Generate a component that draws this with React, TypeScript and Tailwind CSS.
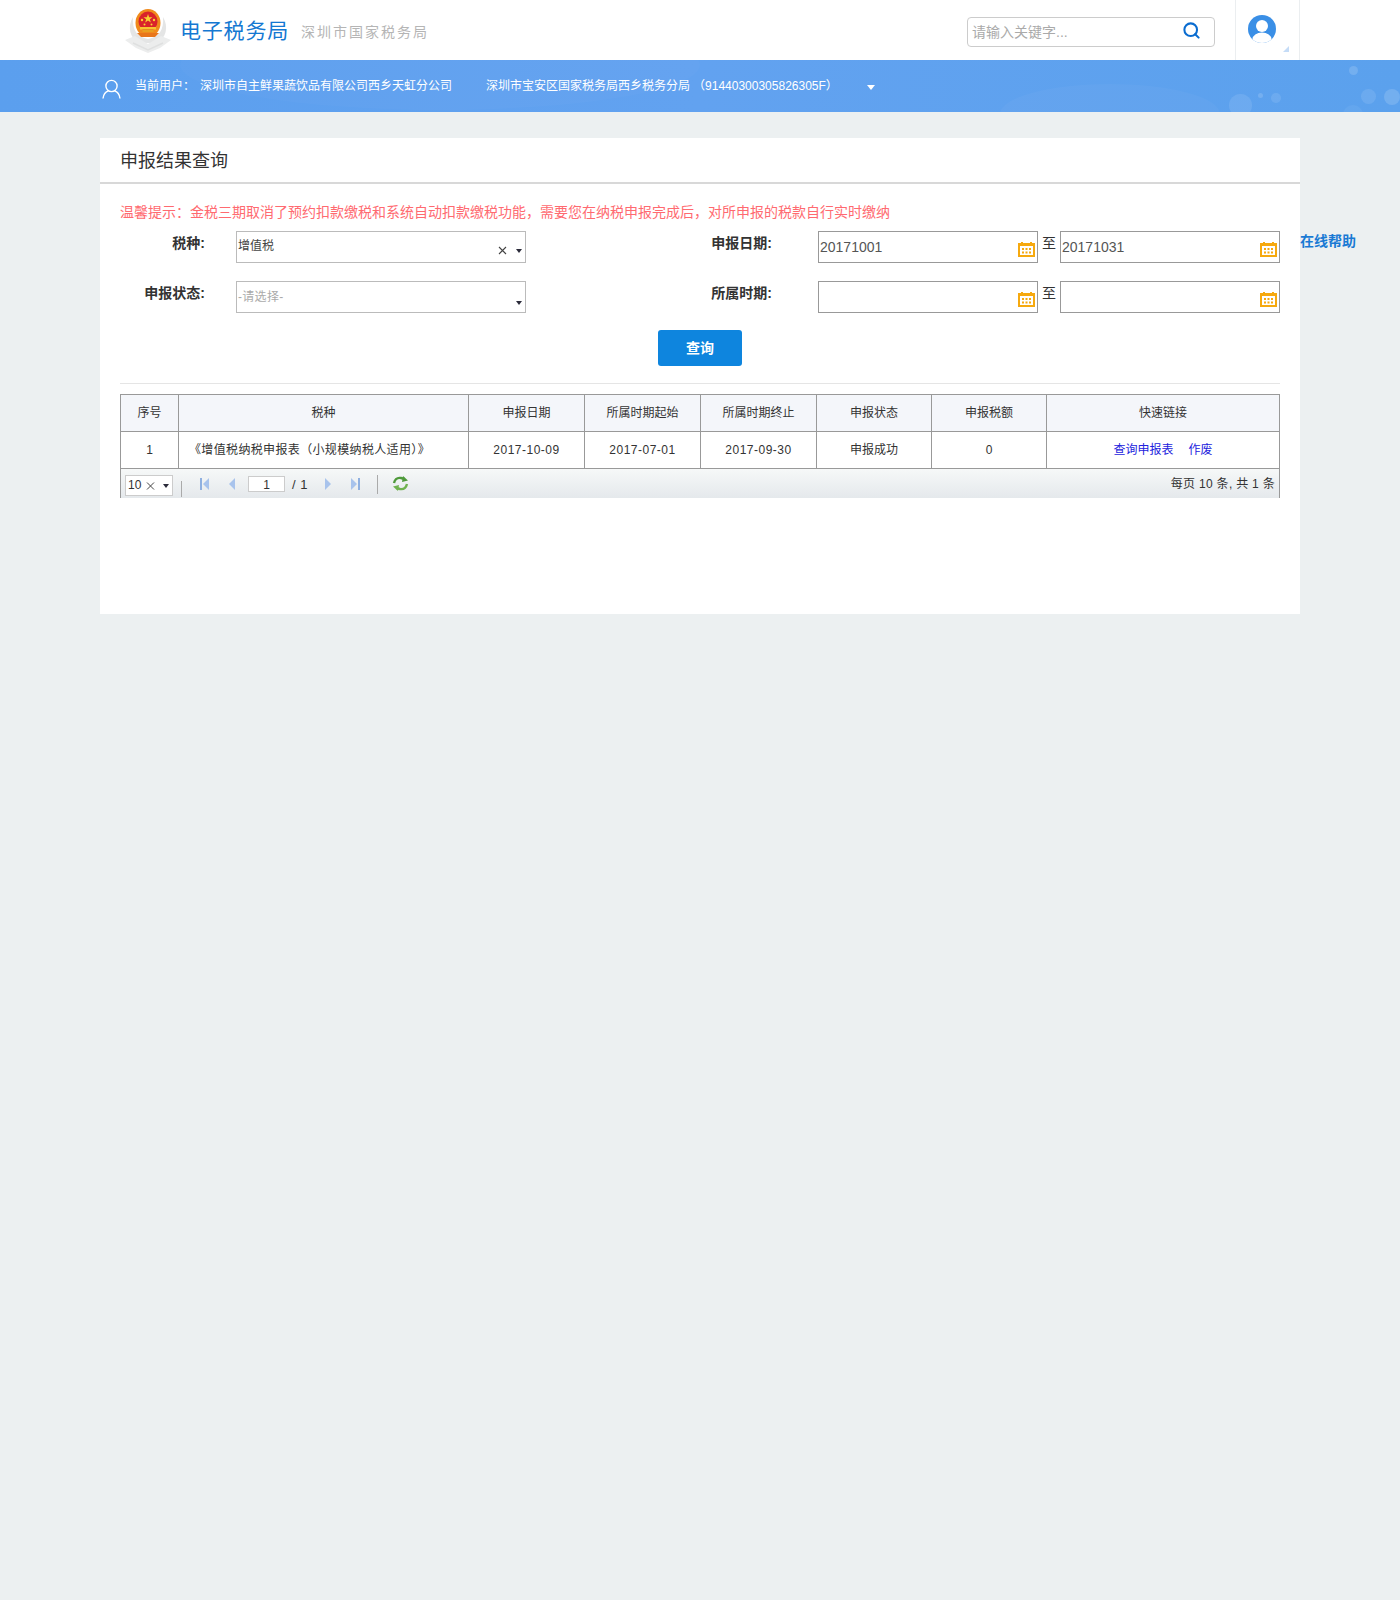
import { Search } from "lucide-react";

const font = "font-['Liberation_Sans','Noto_Sans_CJK_SC',sans-serif]";

const columns = [
  { title: "序号", width: "w-[58px]" },
  { title: "税种", width: "w-[290px]" },
  { title: "申报日期", width: "w-[116px]" },
  { title: "所属时期起始", width: "w-[116px]" },
  { title: "所属时期终止", width: "w-[116px]" },
  { title: "申报状态", width: "w-[115px]" },
  { title: "申报税额", width: "w-[115px]" },
  { title: "快速链接", width: "w-[233px]" },
];

function Emblem() {
  return (
    <svg width="48" height="46" viewBox="0 0 48 46" className="shrink-0">
      {/* wreath and base */}
      <path d="M9 10 C3 20 6 31 15 36 L33 36 C42 31 45 20 39 10 C40 23 35 30 24 32 C13 30 8 23 9 10 Z" fill="#e4e5e5" />
      <path d="M1 33 L11 29 L24 37 L37 29 L47 33 L36 41 L24 46 L12 41 Z" fill="#eceded" />
      <path d="M9 36 L24 43 L39 36" fill="none" stroke="#dfe0e0" strokeWidth="1.5" />
      {/* emblem */}
      <ellipse cx="24" cy="16" rx="12.5" ry="14" fill="#f08a1c" />
      <ellipse cx="24" cy="14.5" rx="9.5" ry="10" fill="#d9232b" />
      <polygon points="24,7 25.1,10.2 28.5,10.2 25.8,12.2 26.8,15.4 24,13.4 21.2,15.4 22.2,12.2 19.5,10.2 22.9,10.2" fill="#f9d331" />
      <circle cx="18" cy="13" r="1.2" fill="#f9d331" />
      <circle cx="30" cy="13" r="1.2" fill="#f9d331" />
      <circle cx="20.5" cy="17.5" r="1" fill="#f9d331" />
      <circle cx="27.5" cy="17.5" r="1" fill="#f9d331" />
      <rect x="16" y="20" width="16" height="2.5" fill="#f7c531" />
      <rect x="18.5" y="22.5" width="11" height="2.5" fill="#e8a020" />
      <path d="M13 26 H35 L31 30 H17 Z" fill="#e8761a" />
    </svg>
  );
}

function UserOutline() {
  return (
    <svg width="19" height="20" viewBox="0 0 19 20" fill="none" stroke="white" strokeWidth="1.4">
      <circle cx="9.5" cy="7" r="5.6" />
      <path d="M1 19.5 C1.5 15 4 12.5 6.5 11.8 M18 19.5 C17.5 15 15 12.5 12.5 11.8" />
    </svg>
  );
}

function Avatar() {
  return (
    <svg width="28" height="28" viewBox="0 0 28 28">
      <defs>
        <clipPath id="avatar-clip">
          <circle cx="14" cy="14" r="14" />
        </clipPath>
      </defs>
      <circle cx="14" cy="14" r="14" fill="#3a8fe6" />
      <g clipPath="url(#avatar-clip)">
        <circle cx="14" cy="11" r="6" fill="white" />
        <ellipse cx="14" cy="24" rx="9.5" ry="6.5" fill="white" />
      </g>
    </svg>
  );
}

function CalendarIcon() {
  return (
    <svg width="17" height="15" viewBox="0 0 17 15" className="absolute right-[2px] bottom-[5px]">
      <rect x="1" y="2" width="15" height="12" fill="white" stroke="#f6a90f" strokeWidth="2" />
      <rect x="0" y="1" width="17" height="3" fill="#f6a90f" />
      <rect x="3" y="0" width="2" height="2" fill="#f6a90f" />
      <rect x="12" y="0" width="2" height="2" fill="#f6a90f" />
      <g fill="#f6a90f">
        <rect x="4" y="6" width="2" height="2" />
        <rect x="7.5" y="6" width="2" height="2" />
        <rect x="11" y="6" width="2" height="2" />
        <rect x="4" y="9.5" width="2" height="2" />
        <rect x="7.5" y="9.5" width="2" height="2" />
        <rect x="11" y="9.5" width="2" height="2" />
      </g>
    </svg>
  );
}

function Caret() {
  return <span className="w-0 h-0 border-x-[3.5px] border-x-transparent border-t-[4px] border-t-[#2b2b3a]" />;
}

function SelectBox({ value, placeholder, clearable }: { value?: string; placeholder?: string; clearable?: boolean }) {
  return (
    <div className="relative w-[290px] h-[32px] border border-[#bbbbbb] bg-white pl-[1px] pt-[5px] text-[12px] leading-[18px]">
      {value ? (
        <span className="text-[#444]">{value}</span>
      ) : (
        <span className="relative top-[1px] tracking-[0.3px] text-[#aaa]">{placeholder}</span>
      )}
      <span className="absolute right-[3px] bottom-[7px] flex items-center gap-[9px]">
        {clearable && (
          <svg width="9" height="9" viewBox="0 0 9 9" stroke="#444" strokeWidth="1.1">
            <path d="M1 1 L8 8 M8 1 L1 8" />
          </svg>
        )}
        <Caret />
      </span>
    </div>
  );
}

function DateBox({ value }: { value?: string }) {
  return (
    <div className="relative w-[220px] h-[32px] border border-[#999] bg-white pl-[1px] text-[14px] leading-[30px] text-[#555]">
      {value}
      <CalendarIcon />
    </div>
  );
}

function DateRange({ from, to }: { from?: string; to?: string }) {
  return (
    <div className="flex items-start">
      <DateBox value={from} />
      <span className="w-[22px] text-center text-[14px] leading-[24px] text-[#333]">至</span>
      <DateBox value={to} />
    </div>
  );
}

function FieldLabel({ children, className }: { children: string; className: string }) {
  return (
    <label className={`${className} whitespace-nowrap text-right text-[14px] font-bold leading-[24px] text-[#333]`}>
      {children}
    </label>
  );
}

function PagerArrow({ dir, bar }: { dir: "left" | "right"; bar?: boolean }) {
  const flip = dir === "right" ? "scale(-1,1) translate(-10,0)" : undefined;
  return (
    <svg width="10" height="12" viewBox="0 0 10 12">
      <g transform={flip}>
        {bar && <rect x="0" y="0" width="2" height="12" fill="#8fb0e0" />}
        <polygon points="3,6 9,0 9,12" fill="#a8c3ec" />
      </g>
    </svg>
  );
}

function RefreshIcon() {
  return (
    <svg width="17" height="15" viewBox="0 0 17 15" fill="none">
      <path d="M2 7 C3 3 6 1.5 9 2 L12.5 3" stroke="#4f9a3b" strokeWidth="2.4" />
      <polygon points="11,0 16,4.5 10,6" fill="#4f9a3b" />
      <path d="M15 8 C14 12 11 13.5 8 13 L4.5 12" stroke="#6fb24f" strokeWidth="2.4" />
      <polygon points="6,15 1,10.5 7,9" fill="#6fb24f" />
    </svg>
  );
}

function Pager() {
  return (
    <div className="flex items-start h-[29px] border-x border-[#999] bg-gradient-to-b from-[#f6f8f8] to-[#e5e9ec] text-[12px] text-[#333]">
      <div className="relative ml-[4px] mt-[6px] w-[48px] h-[21px] border border-[#ccc] bg-white pl-[2px] text-[12px] leading-[18px]">
        10
        <span className="absolute right-[3px] bottom-[5px] flex items-center gap-[8px]">
          <svg width="9" height="8" viewBox="0 0 9 8" stroke="#444" strokeWidth="1">
            <path d="M1 0.5 L8 7.5 M8 0.5 L1 7.5" />
          </svg>
          <Caret />
        </span>
      </div>
      <span className="ml-[8px] mt-[12px] h-[16px] w-px bg-[#aaa]" />
      <div className="ml-[18px] mt-[6px] flex items-center">
        <PagerArrow dir="left" bar />
        <span className="ml-[16px]">
          <PagerArrow dir="left" />
        </span>
        <span className="ml-[12px] w-[37px] h-[16px] border border-[#ccc] bg-white text-center text-[12px] leading-[16px]">1</span>
        <span className="ml-[7px] text-[13px] leading-[16px] mt-[2px] tracking-[0.5px]">/ 1</span>
        <span className="ml-[16px]">
          <PagerArrow dir="right" />
        </span>
        <span className="ml-[16px]">
          <PagerArrow dir="right" bar />
        </span>
      </div>
      <span className="ml-[17px] mt-[6px] h-[19px] w-px bg-[#aaa]" />
      <span className="ml-[14px] mt-[7px]">
        <RefreshIcon />
      </span>
      <span className="ml-auto mr-[4px] mt-[6px] text-[12px] leading-[18px] tracking-[0.3px]">每页 10 条, 共 1 条</span>
    </div>
  );
}

function Bubbles() {
  return (
    <>
      <span className="absolute left-[180px] top-[-40px] w-[520px] h-[90px] rounded-[50%] bg-white/[0.02]" />
      <span className="absolute left-[1000px] top-[24px] w-[220px] h-[60px] rounded-[50%] bg-white/[0.03]" />
      <span className="absolute left-[1229px] top-[34px] w-[23px] h-[23px] rounded-full bg-white/10" />
      <span className="absolute left-[1258px] top-[33px] w-[5px] h-[5px] rounded-full bg-white/15" />
      <span className="absolute left-[1271px] top-[33px] w-[10px] h-[10px] rounded-full bg-white/10" />
      <span className="absolute left-[1349px] top-[6px] w-[9px] h-[9px] rounded-full bg-white/15" />
      <span className="absolute left-[1361px] top-[29px] w-[15px] h-[15px] rounded-full bg-white/10" />
      <span className="absolute left-[1384px] top-[29px] w-[16px] h-[16px] rounded-full bg-white/15" />
      <span className="absolute left-[1343px] top-[45px] w-[20px] h-[20px] rounded-full bg-white/5" />
    </>
  );
}

export default function App() {
  return (
    <div className={`${font} min-h-[1600px] bg-[#ecf0f1]`}>
      {/* Header */}
      <header className="h-[60px] bg-white">
        <div className="mx-auto flex w-[1200px] h-full items-center">
          <div className="ml-[24px] mb-[1px]">
            <Emblem />
          </div>
          <span className="ml-[8px] mt-[2px] text-[21px] tracking-[0.8px] text-[#1478d2]">电子税务局</span>
          <span className="ml-[12px] mt-[5px] text-[14px] tracking-[2px] text-[#b5b5b5]">深圳市国家税务局</span>
          <div className="ml-auto flex h-full items-center">
            <div className="mb-[-4px] flex h-[30px] w-[248px] items-center rounded-[4px] border border-[#ccc] pl-[4px] pr-[13px] text-[14px] text-[#aaa]">
              <span className="flex-1 mt-[1px]">请输入关键字...</span>
              <Search size={19} strokeWidth={2.6} className="mb-[3px] text-[#0a6cd0]" />
            </div>
            <div className="relative ml-[20px] flex h-full w-[65px] items-center border-x border-[#ebeef0] pb-[2px] pl-[12px]">
              <Avatar />
              <span className="absolute right-[10px] bottom-[8px] w-0 h-0 border-l-[6px] border-l-transparent border-b-[6px] border-b-[#c5dcf7]" />
            </div>
          </div>
        </div>
      </header>

      {/* User bar */}
      <div className="relative h-[52px] overflow-hidden bg-gradient-to-r from-[#5b9fee] via-[#62a2f0] to-[#5ba1ed]">
        <Bubbles />
        <div className="relative mx-auto flex h-full w-[1200px] items-center text-[12px] text-white">
          <span className="ml-[2px] mt-[5px]">
            <UserOutline />
          </span>
          <span className="ml-[14px]">当前用户：</span>
          <span className="ml-[5px]">深圳市自主鲜果蔬饮品有限公司西乡天虹分公司</span>
          <span className="ml-[34px]">
            深圳市宝安区国家税务局西乡税务分局
            <span className="ml-[3px]">（91440300305826305F）</span>
          </span>
          <span className="ml-[29px] mt-[3px] w-0 h-0 border-x-[4px] border-x-transparent border-t-[5px] border-t-white" />
        </div>
      </div>

      {/* Query panel */}
      <main className="relative mx-auto mt-[26px] h-[476px] w-[1200px] bg-white">
        <a className="absolute left-full top-[91px] whitespace-nowrap text-[14px] font-bold leading-[24px] text-[#1a7ad4]">在线帮助</a>
        <h2 className="h-[46px] border-b-2 border-[#d8d8d8] pl-[20px] text-[18px] leading-[47px] text-[#333]">申报结果查询</h2>
        <div className="px-[20px]">
          <p className="mt-[18px] h-[20px] text-[14px] leading-[20px] text-[#ff6a70]">
            温馨提示：金税三期取消了预约扣款缴税和系统自动扣款缴税功能，需要您在纳税申报完成后，对所申报的税款自行实时缴纳
          </p>

          <div className="mt-[9px] flex items-start">
            <FieldLabel className="w-[85px]">税种:</FieldLabel>
            <div className="ml-[31px]">
              <SelectBox value="增值税" clearable />
            </div>
            <FieldLabel className="ml-[185px] w-[61px]">申报日期:</FieldLabel>
            <div className="ml-[46px]">
              <DateRange from="20171001" to="20171031" />
            </div>
          </div>

          <div className="mt-[18px] flex items-start">
            <FieldLabel className="w-[85px]">申报状态:</FieldLabel>
            <div className="ml-[31px]">
              <SelectBox placeholder="-请选择-" />
            </div>
            <FieldLabel className="ml-[185px] w-[61px]">所属时期:</FieldLabel>
            <div className="ml-[46px]">
              <DateRange />
            </div>
          </div>

          <div className="mt-[17px] flex justify-center">
            <button className="h-[36px] w-[84px] rounded-[3px] bg-[#0e85de] text-[14px] font-bold text-white">查询</button>
          </div>

          <div className="mt-[17px] h-px bg-[#e5e5e5]" />

          {/* Results table */}
          <div className="mt-[10px] w-[1160px]">
            <table className="w-[1159px] table-fixed border-collapse text-center text-[12px] text-[#333]">
              <thead>
                <tr className="h-[37px] bg-[#f4f6fa]">
                  {columns.map((col) => (
                    <th key={col.title} className={`${col.width} border border-[#999] font-normal`}>
                      {col.title}
                    </th>
                  ))}
                </tr>
              </thead>
              <tbody>
                <tr className="h-[37px]">
                  <td className="border border-[#999]">1</td>
                  <td className="border border-[#999] pl-[10px] text-left tracking-[0.35px]">《增值税纳税申报表（小规模纳税人适用）》</td>
                  <td className="border border-[#999] tracking-[0.5px]">2017-10-09</td>
                  <td className="border border-[#999] tracking-[0.5px]">2017-07-01</td>
                  <td className="border border-[#999] tracking-[0.5px]">2017-09-30</td>
                  <td className="border border-[#999]">申报成功</td>
                  <td className="border border-[#999]">0</td>
                  <td className="border border-[#999] text-[#2222dd]">
                    <a>查询申报表</a>
                    <a className="ml-[15px]">作废</a>
                  </td>
                </tr>
              </tbody>
            </table>
            <Pager />
          </div>
        </div>
      </main>
    </div>
  );
}
